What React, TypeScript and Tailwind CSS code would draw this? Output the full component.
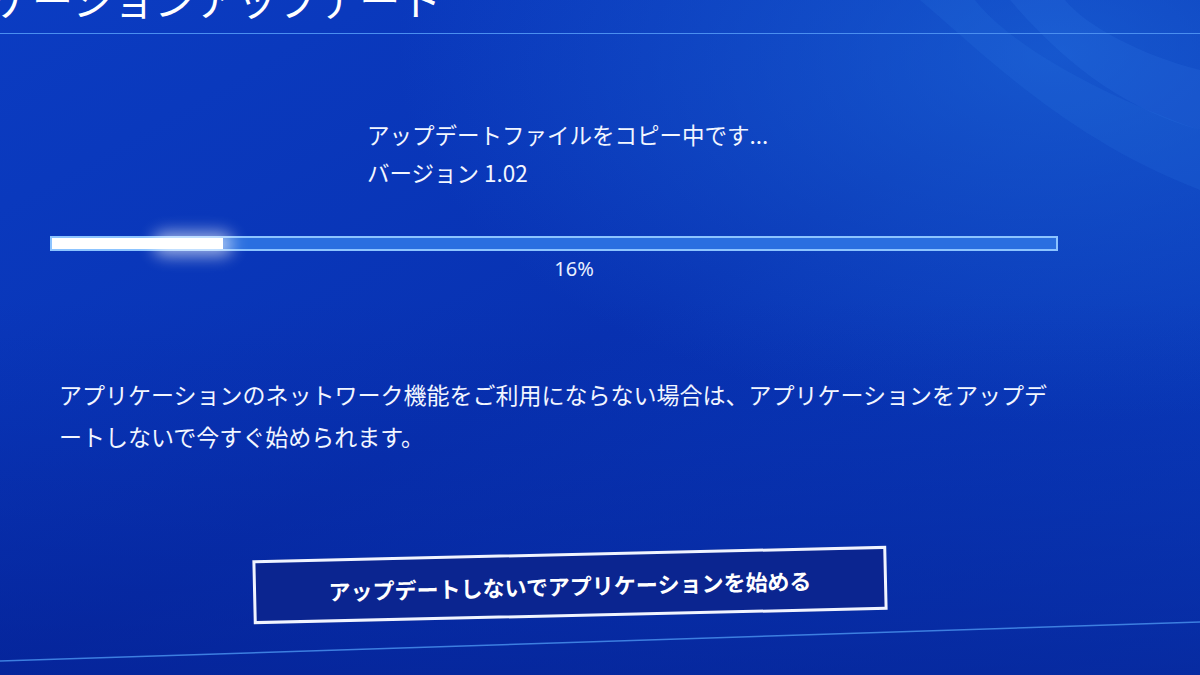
import React from 'react';

const jp = { fontFamily: '"Noto Sans CJK JP", "Noto Sans", sans-serif' };

function Backdrop() {
  // decorative waves + slanted footer line, drawn behind the content
  return (
    <svg className="absolute inset-0 pointer-events-none" width="1200" height="675" viewBox="0 0 1200 675">
      <defs>
        <radialGradient id="glowTR" cx="88%" cy="8%" r="55%">
          <stop offset="0%" stopColor="#1f6fe0" stopOpacity="0.6" />
          <stop offset="100%" stopColor="#1f6fe0" stopOpacity="0" />
        </radialGradient>
        <linearGradient id="darkBottom" x1="0" y1="0" x2="0" y2="1">
          <stop offset="0%" stopColor="#041f95" stopOpacity="0" />
          <stop offset="100%" stopColor="#031a88" stopOpacity="0.55" />
        </linearGradient>
      </defs>
      <rect width="1200" height="675" fill="url(#glowTR)" />
      <rect y="300" width="1200" height="375" fill="url(#darkBottom)" />
      <path d="M920 0 C 990 60, 1070 140, 1200 190 L1200 130 C 1100 95, 1010 45, 975 0 Z" fill="#3a8cf0" opacity="0.12" />
      <path d="M1010 0 C 1070 70, 1130 110, 1200 130 L1200 70 C 1140 55, 1085 25, 1065 0 Z" fill="#4a9cff" opacity="0.1" />
      <line x1="0" y1="661" x2="1200" y2="622" stroke="#3d7fe0" strokeWidth="1.5" />
    </svg>
  );
}

function ProgressBar({ value }: { value: number }) {
  return (
    <div className="relative h-[15px] w-[1008px] border-2 border-[#8cc4ff] bg-[#2a6fe0]">
      <div className="relative h-full bg-white" style={{ width: `${value}%` }}>
        <div className="absolute -right-[10px] -top-[6px] h-[24px] w-[80px] rounded-full bg-white/60 blur-[8px]" />
      </div>
    </div>
  );
}

export default function App() {
  return (
    <div
      className="relative h-[675px] w-[1200px] overflow-hidden bg-gradient-to-br from-[#0b3cc2] via-[#0832b2] to-[#0b3fc0] text-white"
      style={jp}
    >
      <Backdrop />
      <div className="relative flex flex-col">
        <div className="h-[34px] border-b border-[#4a8ff0] overflow-hidden">
          <div className="-ml-[132px] -mt-[22px] whitespace-nowrap text-[41px] leading-none text-white">
            アプリケーションアップデート
          </div>
        </div>

        <div className="ml-[367px] mt-[86px] flex flex-col gap-[10px] text-[22.5px] leading-[28px] text-[#f2f6ff]">
          <span>アップデートファイルをコピー中です...</span>
          <span>バージョン 1.02</span>
        </div>

        <div className="ml-[50px] mt-[50px]">
          <ProgressBar value={17} />
        </div>
        <div className="mt-[6px] w-[1148px] text-center text-[20px] leading-[24px] text-[#e8f0ff]" style={{ fontFamily: '"Noto Sans", sans-serif' }}>
          16%
        </div>

        <p className="ml-[59px] mt-[92px] w-[1005px] text-[23px] leading-[42px] text-[#f2f6ff]">
          アプリケーションのネットワーク機能をご利用にならない場合は、アプリケーションをアップデートしないで今すぐ始められます。
        </p>

        <div className="ml-[253px] mt-[96px]">
          <button className="flex h-[64px] w-[634px] -rotate-[1.3deg] items-center justify-center border-[3px] border-[#f0f4ff] bg-[#0b2590] text-[22px] font-bold text-white" style={jp}>
            アップデートしないでアプリケーションを始める
          </button>
        </div>
      </div>
    </div>
  );
}
